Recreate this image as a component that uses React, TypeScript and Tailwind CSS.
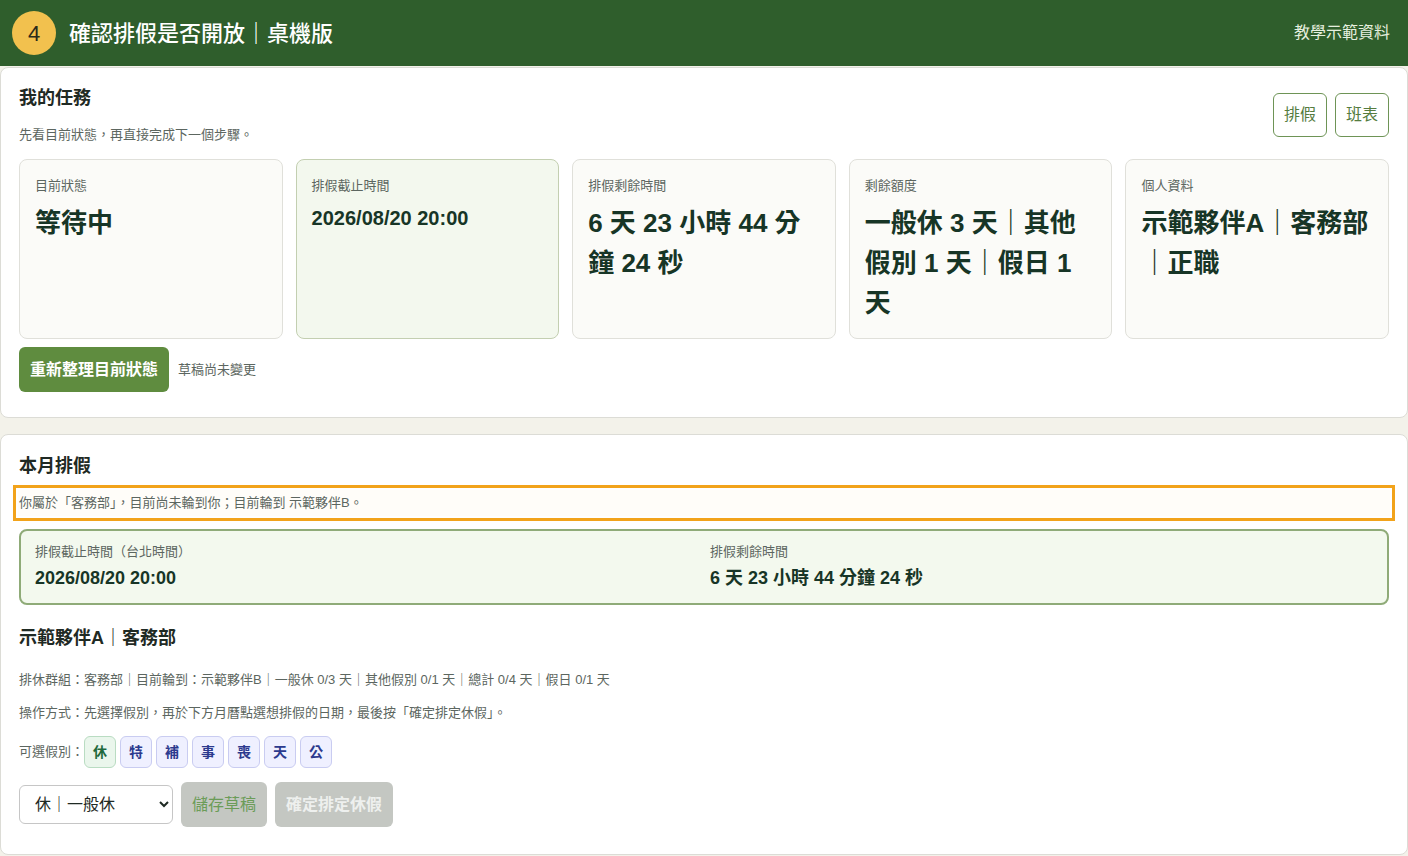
import React from 'react';

const FONT = "font-['Liberation_Sans','Noto_Sans_CJK_TC',sans-serif]";

const SUMMARY = [
  { label: '目前狀態', value: '等待中', highlight: false },
  { label: '排假截止時間', value: '2026/08/20 20:00', highlight: true, small: true },
  { label: '排假剩餘時間', value: '6 天 23 小時 44 分鐘 24 秒', highlight: false },
  { label: '剩餘額度', value: '一般休 3 天｜其他假別 1 天｜假日 1 天', highlight: false },
  { label: '個人資料', value: '示範夥伴A｜客務部｜正職', highlight: false }
];

const LEAVE_TYPES = ['休', '特', '補', '事', '喪', '天', '公'];

export default function App() {
  return (
    <div className={`${FONT} min-h-[856px] bg-[#f3f2ea] text-[#1f2a24]`}>
      {/* Header */}
      <header className="h-[66px] bg-[#2f5e2c] flex items-center justify-between pl-3 pr-[18px]">
        <div className="flex items-center gap-[13px]">
          <div className="w-11 h-11 rounded-full bg-[#f2c14e] flex items-center justify-center text-[22px] text-[#2a2a1a]">4</div>
          <h1 className="text-[22px] font-medium text-white">確認排假是否開放｜桌機版</h1>
        </div>
        <span className="text-[16px] text-[#e6efdf]">教學示範資料</span>
      </header>

      {/* My tasks */}
      <section className="mt-px bg-white border border-[#dcdcd6] rounded-lg px-[18px] pt-[19px] pb-[25px]">
        <div className="flex justify-between items-start">
          <div>
            <h2 className="text-[18px] font-bold text-[#1f2a24] leading-[22px]">我的任務</h2>
            <p className="mt-[18px] text-[13px] text-[#5c6660] leading-4">先看目前狀態，再直接完成下一個步驟。</p>
          </div>
          <div className="flex gap-2 mt-[6px]">
            <button className="w-[54px] h-[44px] rounded-md border border-[#6e9456] text-[#557c3f] text-[16px] bg-white">排假</button>
            <button className="w-[54px] h-[44px] rounded-md border border-[#6e9456] text-[#557c3f] text-[16px] bg-white">班表</button>
          </div>
        </div>
        <div className="grid grid-cols-5 gap-[13px] mt-[16px]">
          {SUMMARY.map(card => (
            <div
              key={card.label}
              className={`h-[180px] rounded-lg border px-[15px] pt-[18px] ${card.highlight ? 'bg-[#f3f8ee] border-[#c3cfb1]' : 'bg-[#fbfbf8] border-[#e0e0da]'}`}
            >
              <div className="text-[13px] text-[#5c6660] leading-4">{card.label}</div>
              <div className={`mt-[9px] font-bold text-[#173526] ${card.small ? 'text-[20px] leading-[30px]' : 'text-[26px] leading-[40px]'}`}>{card.value}</div>
            </div>
          ))}
        </div>
        <div className="flex items-center gap-[9px] mt-[8px]">
          <button className="h-[45px] px-[11px] rounded-md bg-[#5f8c3f] text-white text-[16px] font-bold">重新整理目前狀態</button>
          <span className="text-[13px] text-[#5c6660]">草稿尚未變更</span>
        </div>
      </section>

      {/* Monthly leave */}
      <section className="mt-[16px] bg-white border border-[#dcdcd6] rounded-lg px-[18px] pt-[20px] pb-[27px]">
        <h2 className="text-[18px] font-bold text-[#1f2a24] leading-[22px]">本月排假</h2>
        <div className="-mx-[6px] mt-[8px] border-[3px] border-[#f2a31b] p-[2px]">
          <p className="bg-[#fffdf9] px-[1px] h-[26px] flex items-center text-[13px] text-[#5c6660]">你屬於「客務部」，目前尚未輪到你；目前輪到 示範夥伴B。</p>
        </div>
        <div className="mt-[8px] rounded-lg border-2 border-[#8fab78] bg-[#f3f9ee] grid grid-cols-2 gap-3 px-[14px] pt-[13px] pb-[14px]">
          <div>
            <div className="text-[13px] text-[#5c6660] leading-4">排假截止時間（台北時間）</div>
            <div className="mt-[7px] text-[18px] font-bold text-[#173526] leading-[22px]">2026/08/20 20:00</div>
          </div>
          <div>
            <div className="text-[13px] text-[#5c6660] leading-4">排假剩餘時間</div>
            <div className="mt-[7px] text-[18px] font-bold text-[#173526] leading-[22px]">6 天 23 小時 44 分鐘 24 秒</div>
          </div>
        </div>

        <h3 className="mt-[22px] text-[18px] font-bold text-[#1f2a24] leading-[22px]">示範夥伴A｜客務部</h3>
        <p className="mt-[23px] text-[13px] text-[#5c6660] leading-4">排休群組：客務部｜目前輪到：示範夥伴B｜一般休 0/3 天｜其他假別 0/1 天｜總計 0/4 天｜假日 0/1 天</p>
        <p className="mt-[17px] text-[13px] text-[#5c6660] leading-4">操作方式：先選擇假別，再於下方月曆點選想排假的日期，最後按「確定排定休假」。</p>

        <div className="mt-[15px] flex items-center">
          <span className="text-[13px] text-[#5c6660]">可選假別：</span>
          <div className="flex gap-[4px]">
            {LEAVE_TYPES.map((t, i) => (
              <span
                key={t}
                className={`w-[32px] h-[32px] rounded-md border flex items-center justify-center text-[14px] font-bold ${i === 0 ? 'bg-[#eaf6ec] border-[#b9dcc2] text-[#1f6a3c]' : 'bg-[#eff0ff] border-[#c9ccf1] text-[#2c3a8e]'}`}
              >
                {t}
              </span>
            ))}
          </div>
        </div>

        <div className="mt-[14px] flex items-center gap-2">
          <select className="w-[154px] h-[39px] rounded-md border border-[#c6c6c6] bg-white px-[11px] text-[16px] text-[#1f2a24]">
            <option>休｜一般休</option>
          </select>
          <button disabled className="h-[45px] px-[11px] rounded-md bg-[#c4c7c2] text-[#6b9c58] text-[16px]">儲存草稿</button>
          <button disabled className="h-[45px] px-[11px] rounded-md bg-[#c4c7c2] text-[#eef0ee] text-[16px] font-bold">確定排定休假</button>
        </div>
      </section>
    </div>
  );
}
